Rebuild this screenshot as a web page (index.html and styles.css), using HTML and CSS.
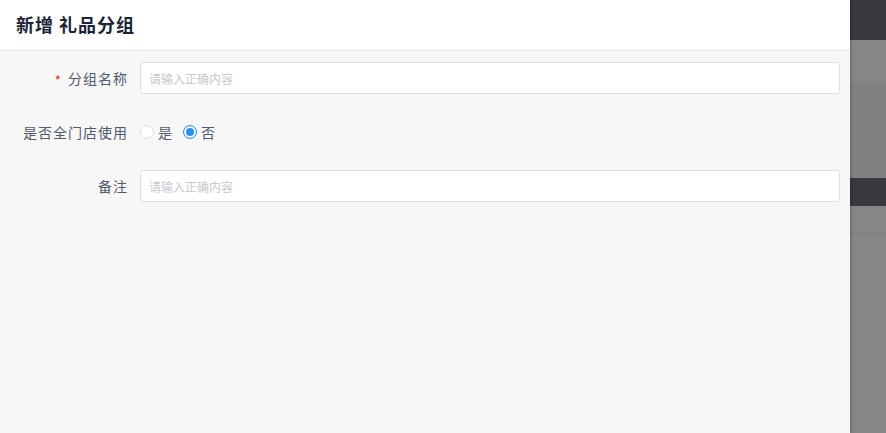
FILE: index.html
```html
<!DOCTYPE html>
<html lang="zh-CN">
<head>
 <meta charset="UTF-8">
 <meta name="viewport" content="width=device-width, initial-scale=1.0">
 <title>新增 礼品分组</title>
 <link rel="stylesheet" href="styles.css">
</head>
<body>
 <div class="screen">
  <div class="drawer">
   <div class="drawer-header">新增 礼品分组</div>
   <form class="drawer-body">
    <div class="form-row">
     <label class="form-label"><span class="req">*</span>分组名称</label>
     <input class="form-input" type="text" placeholder="请输入正确内容">
    </div>
    <div class="form-row">
     <label class="form-label">是否全门店使用</label>
     <div class="radio-group">
      <span class="radio"><span class="radio-dot"></span>是</span>
      <span class="radio checked"><span class="radio-dot"></span>否</span>
     </div>
    </div>
    <div class="form-row">
     <label class="form-label">备注</label>
     <input class="form-input" type="text" placeholder="请输入正确内容">
    </div>
   </form>
  </div>
  <!-- page behind the mask -->
  <div class="backdrop">
   <div class="bg-dark h40"></div>
   <div class="bg-grey h43"></div>
   <div class="bg-grey2 h95"></div>
   <div class="bg-dark h28"></div>
   <div class="bg-grey h28 line"></div>
   <div class="bg-grey fill"></div>
  </div>
 </div>
</body>
</html>
```

FILE: styles.css
```css
* { box-sizing: border-box; }
body {
margin: 0;
font-family: "Noto Sans CJK SC", "Noto Sans", sans-serif;
font-size: 14px;
color: #515a6e;
}
.screen {
display: flex;
width: 886px;
height: 433px;
overflow: hidden;
}
.drawer {
width: 850px;
display: flex;
flex-direction: column;
background: #f7f7f7;
position: relative;
z-index: 1;
box-shadow: 1px 0 3px rgba(0,0,0,.25);
}
.drawer-header {
height: 51px;
padding-left: 16px;
line-height: 49px;
font-size: 18px;
font-weight: bold;
letter-spacing: 1px;
color: #1c2438;
background: #fff;
border-bottom: 1px solid #e8e8e8;
}
.drawer-body {
margin: 0;
padding: 11px 10px 0 0;
display: flex;
flex-direction: column;
gap: 22px;
}
.form-row {
display: flex;
align-items: center;
height: 32px;
}
.form-label {
width: 140px;
padding-right: 12px;
text-align: right;
letter-spacing: 1px;
}
.req {
color: #e0413f;
margin-right: 6px;
position: relative;
top: 2px;
}
.form-input {
flex: 1;
height: 32px;
padding: 0 8px;
border: 1px solid #dcdee2;
border-radius: 3px;
background: #fff;
font-family: inherit;
font-size: 12px;
outline: none;
}
.form-input::placeholder {
color: #c5c8ce;
}
.radio-group {
display: flex;
gap: 10px;
}
.radio {
display: flex;
align-items: center;
gap: 4px;
letter-spacing: 1px;
}
.radio-dot {
width: 14px;
height: 14px;
border-radius: 50%;
border: 1px solid #dcdee2;
background: #fff;
}
.radio.checked .radio-dot {
border-color: #2d8cf0;
box-shadow: inset 0 0 0 2px #fff, inset 0 0 0 6px #2d8cf0;
}
.backdrop {
flex: 1;
display: flex;
flex-direction: column;
}
.bg-dark { background: #38393c; }
.bg-grey { background: #868686; }
.bg-grey2 { background: #818181; }
.h40 { height: 40px; }
.h43 { height: 43px; }
.h95 { height: 95px; }
.h28 { height: 28px; }
.line { border-bottom: 1px solid #7a7a7a; }
.fill { flex: 1; }
```
